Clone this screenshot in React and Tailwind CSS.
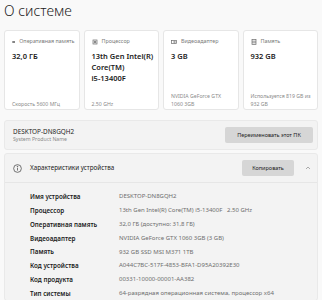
import React from 'react';

const cards = [
  { icon: 'ram', label: 'Оперативная память', value: ['32,0 ГБ'], foot: ['Скорость 5600 МГц'] },
  { icon: 'cpu', label: 'Процессор', value: ['13th Gen Intel(R)', 'Core(TM)', 'i5-13400F'], foot: ['2.50 GHz'] },
  { icon: 'gpu', label: 'Видеоадаптер', value: ['3 GB'], foot: ['NVIDIA GeForce GTX', '1060 3GB'] },
  { icon: 'disk', label: 'Память', value: ['932 GB'], foot: ['Используется 819 GB из', '932 GB'] },
];

const specs = [
  ['Имя устройства', 'DESKTOP-DN8GQH2'],
  ['Процессор', '13th Gen Intel(R) Core(TM) i5-13400F   2.50 GHz'],
  ['Оперативная память', '32,0 ГБ (доступно: 31,8 ГБ)'],
  ['Видеоадаптер', 'NVIDIA GeForce GTX 1060 3GB (3 GB)'],
  ['Память', '932 GB SSD MSI M371 1TB'],
  ['Код устройства', 'A044C7BC-517F-4853-BFA1-D95A20392E30'],
  ['Код продукта', '00331-10000-00001-AA382'],
  ['Тип системы', '64-разрядная операционная система, процессор x64'],
];

const CardIcon = ({ type }) => {
  if (type === 'ram')
    return (
      <svg width="6" height="6" viewBox="0 0 6 6">
        <rect x="0.5" y="1.5" width="5" height="3" fill="#6b6b6b" />
      </svg>
    );
  if (type === 'cpu')
    return (
      <svg width="6" height="6" viewBox="0 0 6 6" fill="none" stroke="#6b6b6b" strokeWidth="0.7">
        <rect x="1" y="1" width="4" height="4" />
        <rect x="2.2" y="2.2" width="1.6" height="1.6" />
      </svg>
    );
  if (type === 'gpu')
    return (
      <svg width="6" height="6" viewBox="0 0 6 6" fill="none" stroke="#6b6b6b" strokeWidth="0.7">
        <rect x="0.5" y="1.5" width="5" height="3" />
        <circle cx="3.5" cy="3" r="0.8" />
      </svg>
    );
  return (
    <svg width="6" height="6" viewBox="0 0 6 6" fill="none" stroke="#6b6b6b" strokeWidth="0.7">
      <rect x="1" y="0.5" width="4" height="5" />
      <path d="M1 2.2h4M1 3.8h4" />
    </svg>
  );
};

const App = () => {
  return (
    <div className="w-[322px] h-[300px] overflow-hidden bg-[#f9f9f9] text-[#1b1b1b] font-['Noto_Sans',sans-serif]">
      <h1 className="pl-[4px] pt-[2px] h-[30px] text-[14px] font-light leading-[18px]">О системе</h1>

      <div className="grid grid-cols-4 gap-[4px] pl-[4px] pr-[4px]">
        {cards.map((c, i) => (
          <div key={i} className="h-[80px] bg-white border border-[#e6e6e6] rounded-[3px] pl-[7px] pr-[4px] pt-[8px] pb-[1px] flex flex-col">
            <div className="flex items-center gap-[4px] h-[6px] text-[5.4px] text-[#7a7a7a] leading-none whitespace-nowrap">
              <CardIcon type={c.icon} />
              <span>{c.label}</span>
            </div>
            <div className="mt-[6px] text-[7.5px] font-semibold leading-[11px]">
              {c.value.map((v) => (
                <div key={v}>{v}</div>
              ))}
            </div>
            <div className="mt-auto text-[5.2px] leading-[8px] text-[#8a8a8a]">
              {c.foot.map((f) => (
                <div key={f}>{f}</div>
              ))}
            </div>
          </div>
        ))}
      </div>

      <div className="mx-[4px] mt-[10px] h-[30px] bg-[#f3f3f3] border border-[#e9e9e9] rounded-[3px] flex items-center pl-[8px] pr-[4px]">
        <div className="flex-1">
          <div className="text-[6.4px] leading-[8px] text-[#1b1b1b]">DESKTOP-DN8GQH2</div>
          <div className="text-[5.2px] leading-[7px] text-[#8a8a8a]">System Product Name</div>
        </div>
        <button className="h-[16px] w-[88px] bg-[#d6d6d6] rounded-[2px] text-[5.5px] text-[#1b1b1b]">Переименовать этот ПК</button>
      </div>

      <div className="mx-[4px] mt-[3px] bg-[#f3f3f3] border border-[#e9e9e9] rounded-[3px]">
        <div className="h-[29px] flex items-center pl-[8px] pr-[6px] border-b border-[#e6e6e6]">
          <svg width="9" height="9" viewBox="0 0 10 10" fill="none" stroke="#444" strokeWidth="0.8">
            <circle cx="5" cy="5" r="4.3" />
            <path d="M5 4.3v3" />
            <circle cx="5" cy="2.9" r="0.35" fill="#444" />
          </svg>
          <span className="ml-[8px] flex-1 text-[6.3px] text-[#1b1b1b]">Характеристики устройства</span>
          <button className="h-[16px] w-[52px] bg-[#d6d6d6] rounded-[2px] text-[5.5px] text-[#1b1b1b]">Копировать</button>
          <svg className="ml-[11px]" width="6" height="6" viewBox="0 0 6 6" fill="none" stroke="#8a8a8a" strokeWidth="0.7">
            <path d="M1 4l2-2 2 2" />
          </svg>
        </div>
        <div className="pt-[7px] pl-[25px]">
          {specs.map(([k, v]) => (
            <div key={k} className="flex h-[13.8px] items-center whitespace-pre">
              <div className="w-[89px] text-[6.3px] font-semibold text-[#1b1b1b]">{k}</div>
              <div className="text-[6px] text-[#6e6e6e]">{v}</div>
            </div>
          ))}
        </div>
      </div>
    </div>
  );
};

export default App;
